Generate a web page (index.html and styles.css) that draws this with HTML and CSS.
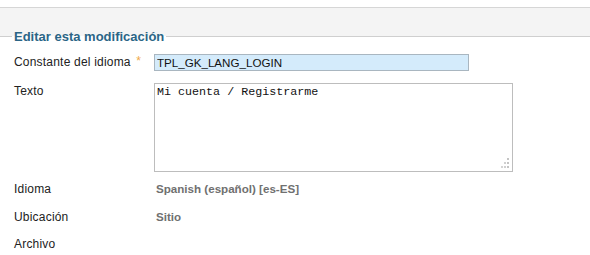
FILE: index.html
```html
<!DOCTYPE html>
<html lang="es">
<head>
  <meta charset="UTF-8" />
  <title>Editar esta modificación</title>
  <link rel="stylesheet" href="styles.css">
</head>
<body>
  <div class="panel">
    <fieldset class="edit-form">
      <legend>Editar esta modificación</legend>

      <div class="row">
        <label for="constant">Constante del idioma <span class="star">*</span></label>
        <input type="text" id="constant" class="field" value="TPL_GK_LANG_LOGIN">
      </div>

      <div class="row">
        <label for="text">Texto</label>
        <div class="text-wrap">
          <textarea id="text" class="text-box">Mi cuenta / Registrarme</textarea>
          <svg class="grip" width="9" height="10" viewBox="0 0 9 10">
            <rect x="6" y="0" width="2" height="2" fill="#c4c4c4"/>
            <rect x="3" y="4" width="2" height="2" fill="#d0d0d0"/>
            <rect x="6" y="4" width="2" height="2" fill="#c4c4c4"/>
            <rect x="0" y="8" width="2" height="2" fill="#d4d4d4"/>
            <rect x="3" y="8" width="2" height="2" fill="#d0d0d0"/>
            <rect x="6" y="8" width="2" height="2" fill="#c4c4c4"/>
          </svg>
        </div>
      </div>

      <div class="row info">
        <label>Idioma</label>
        <span class="value">Spanish (español) [es-ES]</span>
      </div>

      <div class="row info">
        <label>Ubicación</label>
        <span class="value">Sitio</span>
      </div>

      <div class="row info">
        <label>Archivo</label>
        <span class="value"></span>
      </div>
    </fieldset>
  </div>
</body>
</html>
```

FILE: styles.css
```css
body {
  margin: 0;
  background: #fff;
  font-family: 'Liberation Sans', Arial, sans-serif;
  font-size: 12px;
  color: #222;
}

.panel {
  margin-top: 7px;
  border-top: 1px solid #d6d6d6;
  background-color: #f4f4f4;
  padding-top: 21px;
}

.edit-form {
  margin: 0;
  padding: 10px 12px 20px;
  border: none;
  border-top: 1px solid #cfcfcf;
  background-color: #fff;
}

.edit-form legend {
  padding: 0 2px;
  color: #2b6586;
  font-size: 13px;
  font-weight: bold;
}

.row {
  display: flex;
  align-items: flex-start;
  padding-left: 2px;
  margin-bottom: 12px;
}

.row label {
  width: 140px;
  flex-shrink: 0;
  line-height: 16px;
  letter-spacing: 0.2px;
}

.star {
  color: #f0a848;
  position: relative;
  top: -1px;
  margin-left: 2px;
}

.field {
  width: 315px;
  height: 17px;
  box-sizing: border-box;
  margin: 0;
  padding: 0 2px;
  border: 1px solid #a9b6c0;
  background-color: #d4ebfb;
  font-family: 'Liberation Sans', Arial, sans-serif;
  font-size: 11.6px;
  color: #111;
}

.text-wrap {
  position: relative;
  width: 359px;
  height: 89px;
  margin-bottom: -3px;
}

.text-box {
  display: block;
  width: 100%;
  height: 100%;
  box-sizing: border-box;
  margin: 0;
  padding: 1px 2px;
  border: 1px solid #bdbdbd;
  font-family: 'Liberation Mono', 'Courier New', monospace;
  font-size: 11.7px;
  line-height: 14px;
  color: #111;
  resize: none;
}

.grip {
  position: absolute;
  right: 3px;
  bottom: 4px;
}

.info {
  margin-bottom: 11.5px;
}

.value {
  padding-left: 2px;
  color: #707070;
  font-weight: bold;
  font-size: 11.6px;
  line-height: 16px;
}
```
